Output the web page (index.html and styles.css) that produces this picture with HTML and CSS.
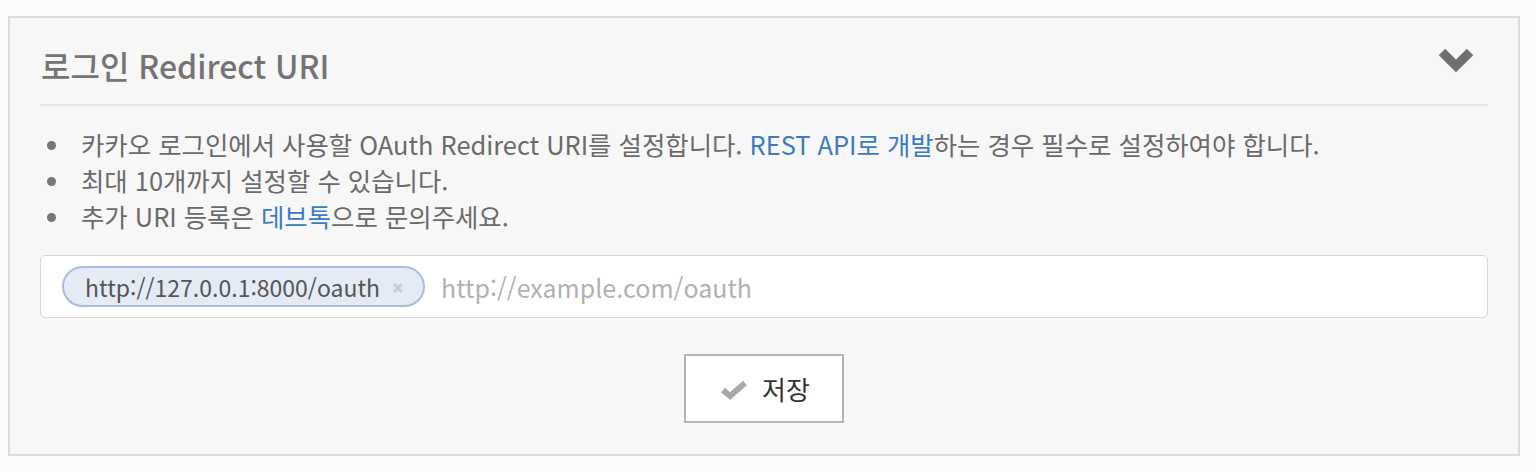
FILE: index.html
```html
<!DOCTYPE html>
<html lang="ko">
<head>
<meta charset="utf-8">
<link rel="stylesheet" href="styles.css">
</head>
<body>
<section class="panel">
  <div class="panel-head">
    <h2 class="title">로그인 Redirect URI</h2>
    <svg class="chevron" width="36" height="26" viewBox="0 0 36 26"><polyline points="4,5 18,19 32,5" fill="none" stroke="#6f6f6f" stroke-width="9" stroke-linecap="butt" stroke-linejoin="miter"/></svg>
  </div>
  <ul class="notes">
    <li>카카오 로그인에서 사용할 OAuth Redirect URI를 설정합니다. <a class="link">REST API로 개발</a>하는 경우 필수로 설정하여야 합니다.</li>
    <li>최대 10개까지 설정할 수 있습니다.</li>
    <li>추가 URI 등록은 <a class="link">데브톡</a>으로 문의주세요.</li>
  </ul>
  <div class="uri-input">
    <span class="tag">http://127.0.0.1:8000/oauth<svg class="tag-x" width="12" height="12" viewBox="0 0 12 12"><path d="M2 2L10 10M10 2L2 10" stroke="#c3cddb" stroke-width="3"/></svg></span>
    <span class="placeholder">http://example.com/oauth</span>
  </div>
  <div class="actions">
    <button class="save-btn"><svg class="check" width="28" height="20" viewBox="0 0 28 20"><polyline points="3,10 10,16 25,3" fill="none" stroke="#a9a9a9" stroke-width="6"/></svg><span>저장</span></button>
  </div>
</section>
</body>
</html>
```
FILE: styles.css
```css
html, body {
  margin: 0;
  padding: 0;
  background: #fcfcfc;
}
body {
  padding: 16px 16px 0 8px;
  font-family: "Noto Sans CJK KR", "Noto Sans", sans-serif;
}
.panel {
  width: 1512px;
  box-sizing: border-box;
  height: 440px;
  border: 2px solid #dcdcdc;
  background: #f7f7f7;
  padding: 0 30px;
}
.panel-head {
  display: flex;
  align-items: center;
  justify-content: space-between;
  height: 88px;
  box-sizing: border-box;
  padding: 28px 14px 20px 1px;
  border-bottom: 2px solid #e6e6e6;
}
.title {
  margin: 0;
  font-size: 32px;
  line-height: 38px;
  font-weight: 500;
  color: #747474;
}
.chevron {
  display: block;
  margin-top: -10px;
}
.notes {
  list-style: none;
  margin: 20px 0 0;
  padding: 0 0 0 41px;
  font-size: 25.4px;
  line-height: 36px;
  color: #6a6a6a;
}
.notes li {
  height: 36px;
  white-space: nowrap;
}
.notes li::before {
  content: "";
  display: inline-block;
  width: 9px;
  height: 9px;
  border-radius: 50%;
  background: #777;
  margin: 0 25px 0 -34px;
  vertical-align: 5px;
}
.link {
  color: #3b7bbf;
}
.uri-input {
  margin-top: 21px;
  height: 63px;
  box-sizing: border-box;
  border: 1px solid #d6d6d6;
  border-radius: 5px;
  background: #fff;
  display: flex;
  align-items: center;
  padding: 0 21px;
  gap: 16px;
}
.tag {
  display: inline-flex;
  align-items: center;
  height: 41px;
  box-sizing: border-box;
  padding: 0 19px 0 21px;
  border: 2px solid #a5bee0;
  border-radius: 21px;
  background: #e4ebf5;
  color: #555;
  font-size: 23px;
}
.tag-x {
  display: block;
  margin-left: 12px;
  margin-top: 2px;
}
.placeholder {
  color: #b1b1b1;
  font-size: 25px;
}
.actions {
  display: flex;
  justify-content: center;
  margin-top: 36px;
}
.save-btn {
  width: 160px;
  height: 69px;
  border: 2px solid #b3b3b3;
  background: #fff;
  display: flex;
  align-items: center;
  justify-content: center;
  gap: 14px;
  font-family: "Noto Sans CJK KR", sans-serif;
  font-size: 26px;
  color: #333;
  padding: 0 0 0 2px;
}
.check {
  display: block;
  margin-top: 2px;
}
```
